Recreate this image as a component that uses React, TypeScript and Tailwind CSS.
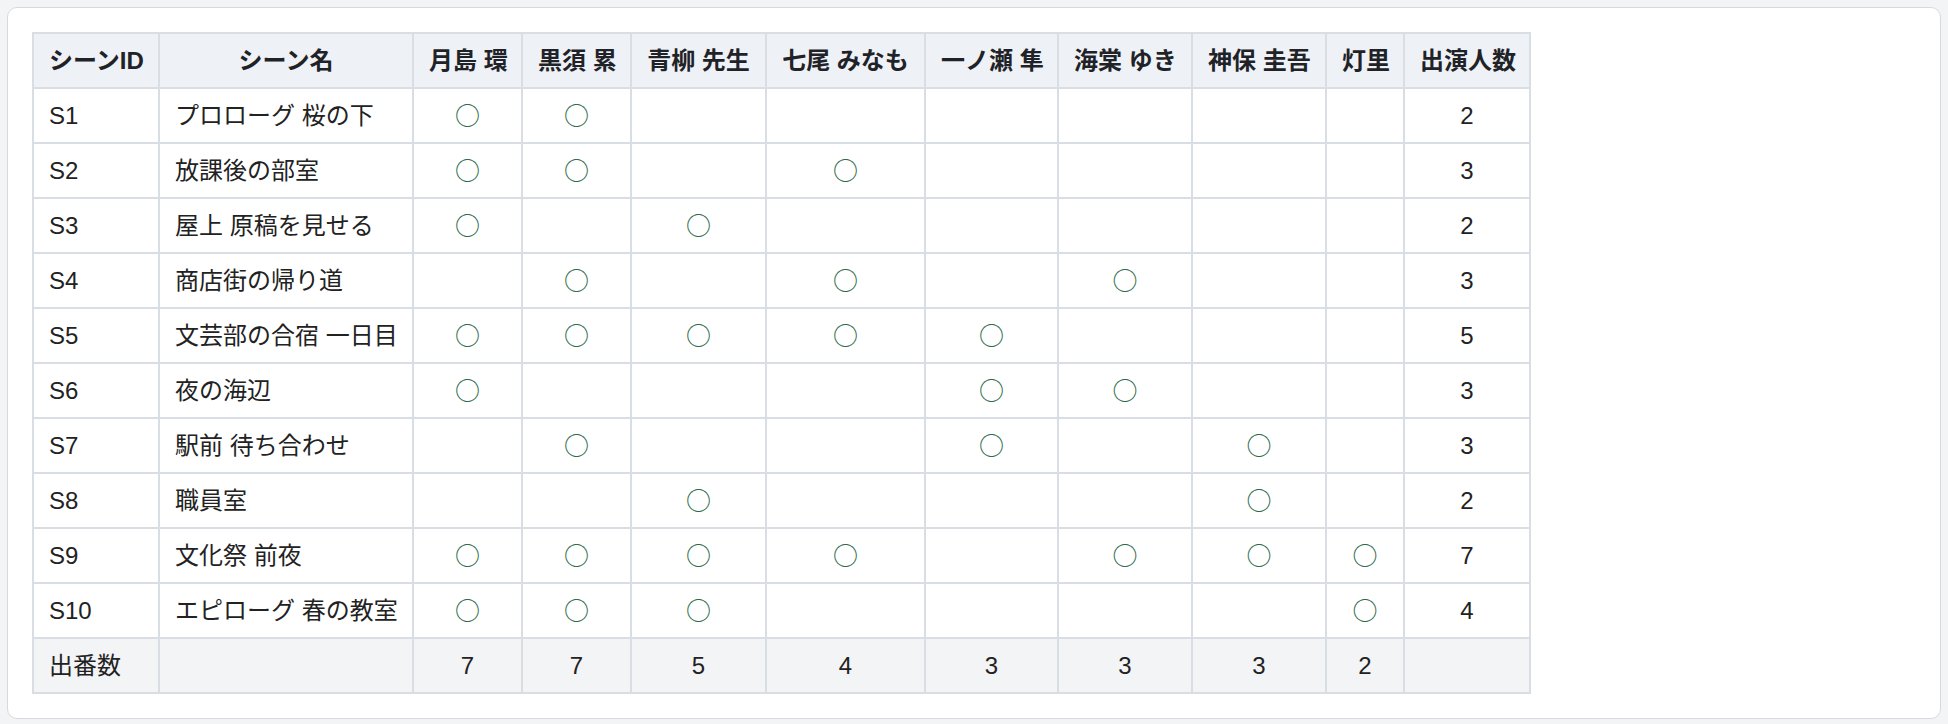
import React from 'react';

const cast = ['月島 環', '黒須 累', '青柳 先生', '七尾 みなも', '一ノ瀬 隼', '海棠 ゆき', '神保 圭吾', '灯里'];

// which cast members appear in each scene (index into cast)
const scenes: { id: string; name: string; on: number[] }[] = [
  { id: 'S1', name: 'プロローグ 桜の下', on: [0, 1] },
  { id: 'S2', name: '放課後の部室', on: [0, 1, 3] },
  { id: 'S3', name: '屋上 原稿を見せる', on: [0, 2] },
  { id: 'S4', name: '商店街の帰り道', on: [1, 3, 5] },
  { id: 'S5', name: '文芸部の合宿 一日目', on: [0, 1, 2, 3, 4] },
  { id: 'S6', name: '夜の海辺', on: [0, 4, 5] },
  { id: 'S7', name: '駅前 待ち合わせ', on: [1, 4, 6] },
  { id: 'S8', name: '職員室', on: [2, 6] },
  { id: 'S9', name: '文化祭 前夜', on: [0, 1, 2, 3, 5, 6, 7] },
  { id: 'S10', name: 'エピローグ 春の教室', on: [0, 1, 2, 7] },
];

const castWidths = ['w-[109px]', 'w-[109px]', 'w-[135px]', 'w-[159px]', 'w-[133px]', 'w-[134px]', 'w-[134px]', 'w-[78px]'];

const cell = 'border-2 border-[#d9dee5] px-[15px] py-0 leading-[24px] whitespace-nowrap align-middle';

export default function App() {
  const counts = cast.map((_, i) => scenes.filter((s) => s.on.includes(i)).length);

  return (
    <div className="min-h-screen bg-[#f3f4f6] p-[7px] font-['Liberation_Sans','Noto_Sans_CJK_JP',sans-serif] text-[24px] text-[#222]">
      <div className="rounded-[10px] border border-[#d6dae0] bg-white px-6 pt-6 pb-6">
        <table className="w-[1497px] table-fixed border-collapse">
          <colgroup>
            <col className="w-[126px]" />
            <col className="w-[254px]" />
            {castWidths.map((w, i) => (
              <col key={i} className={w} />
            ))}
            <col className="w-[126px]" />
          </colgroup>
          <thead>
            <tr className="h-[55px] bg-[#eef1f5] font-bold text-[#1f2328]">
              <th className={`${cell} text-left`}>シーンID</th>
              <th className={`${cell} text-center`}>シーン名</th>
              {cast.map((c) => (
                <th key={c} className={`${cell} text-center`}>
                  {c}
                </th>
              ))}
              <th className={`${cell} text-center`}>出演人数</th>
            </tr>
          </thead>
          <tbody>
            {scenes.map((s) => (
              <tr key={s.id} className="h-[55px]">
                <td className={`${cell} text-left`}>{s.id}</td>
                <td className={`${cell} text-left`}>{s.name}</td>
                {cast.map((c, i) => (
                  <td key={c} className={`${cell} text-center`}>
                    {s.on.includes(i) && (
                      <span className="font-['Noto_Sans_CJK_JP',sans-serif] text-[25px] text-[#2d6b4a]">○</span>
                    )}
                  </td>
                ))}
                <td className={`${cell} text-center`}>{s.on.length}</td>
              </tr>
            ))}
          </tbody>
          <tfoot>
            <tr className="h-[55px] bg-[#f3f4f6]">
              <td className={`${cell} text-left`}>出番数</td>
              <td className={cell}></td>
              {counts.map((n, i) => (
                <td key={i} className={`${cell} text-center`}>
                  {n}
                </td>
              ))}
              <td className={cell}></td>
            </tr>
          </tfoot>
        </table>
      </div>
    </div>
  );
}
